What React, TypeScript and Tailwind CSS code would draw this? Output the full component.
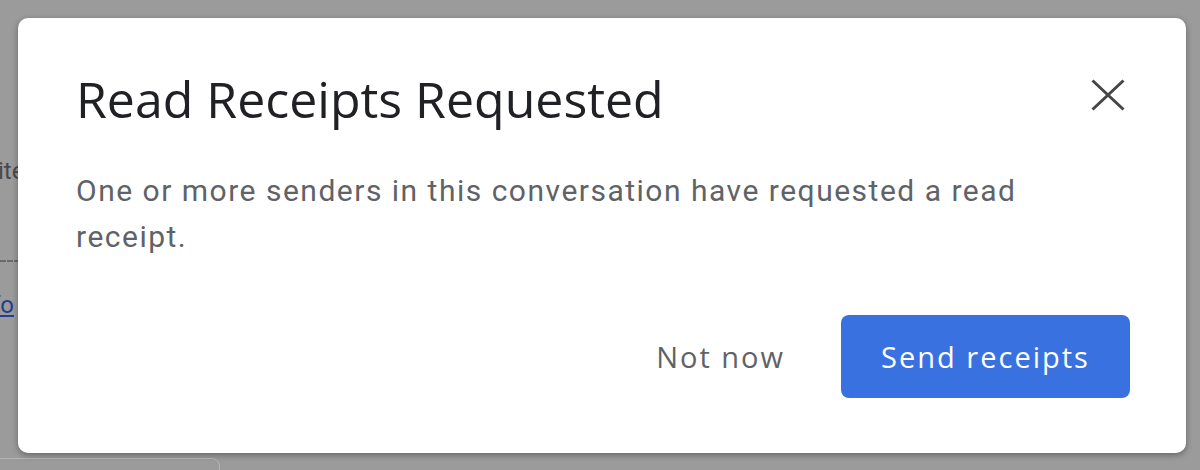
import React from "react";

export default function App() {
  return (
    <div className="relative h-[470px] w-[1200px] overflow-hidden bg-[#9b9b9b]">
      {/* background page content (dimmed) */}
      <div className="flex flex-col pt-[156px]" style={{ fontFamily: "Roboto, sans-serif" }}>
        <div className="ml-[-2px] text-[24px] leading-[30px] text-[#4a4a4a]">ite</div>
        <div className="mt-[74px] h-0 w-[20px] border-t-2 border-dashed border-[#6a6a6a]" />
        <div className="ml-[-8px] mt-[28px] text-[24px] leading-[30px] text-[#233f8f] underline">fo</div>
        <div className="ml-[-10px] mt-[138px] h-[30px] w-[230px] rounded-[8px] border border-[#b5b5b5]" />
      </div>

      {/* dialog */}
      <div className="absolute left-[18px] top-[18px] flex h-[435px] w-[1168px] flex-col rounded-[10px] bg-white pl-[58px] pr-[56px] shadow-[0_2px_6px_rgba(0,0,0,0.35)]">
        <div className="flex items-start justify-between pt-[51px]">
          <h1
            className="text-[50px] leading-[60px] text-[#202124]"
            style={{ fontFamily: "'Open Sans', sans-serif" }}
          >
            Read Receipts Requested
          </h1>
          <button className="mr-[5px] mt-[10px] flex h-[32px] w-[34px] items-center justify-center">
            <svg width="34" height="32" viewBox="0 0 34 32" fill="none">
              <path d="M1.5 1.5L32.5 30.5M32.5 1.5L1.5 30.5" stroke="#444746" strokeWidth="3" />
            </svg>
          </button>
        </div>
        <p
          className="mt-[39px] w-[1000px] text-[30px] leading-[46px] tracking-[1.5px] text-[#5f6368]"
          style={{ fontFamily: "Roboto, sans-serif" }}
        >
          One or more senders in this conversation have requested a read receipt.
        </p>
        <div className="mt-auto mb-[55px] flex items-center justify-end gap-[56px]">
          <button
            className="text-[29px] tracking-[2px] text-[#5f6368]"
            style={{ fontFamily: "'Open Sans', sans-serif" }}
          >
            Not now
          </button>
          <button
            className="flex h-[83px] w-[289px] items-center justify-center rounded-[8px] bg-[#3a71e0] text-[29px] tracking-[2px] text-white"
            style={{ fontFamily: "'Open Sans', sans-serif" }}
          >
            Send receipts
          </button>
        </div>
      </div>
    </div>
  );
}
